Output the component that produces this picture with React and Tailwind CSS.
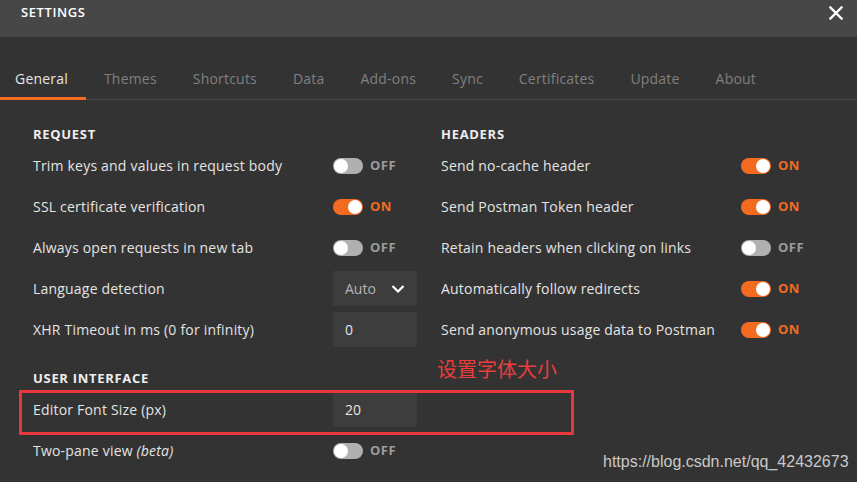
import React from "react";

const Toggle = ({ on }) => (
  <div className="flex items-center gap-[7px]">
    <div
      className={
        "w-[30px] h-[16px] rounded-full flex items-center px-[1px] " +
        (on ? "bg-[#f26b21] justify-end" : "bg-[#b0b0b0] justify-start")
      }
    >
      <div className="w-[14px] h-[14px] rounded-full bg-white" />
    </div>
    <span
      className={
        "text-[13px] font-bold tracking-[0.5px] " +
        (on ? "text-[#f26b21]" : "text-[#9c9c9c]")
      }
    >
      {on ? "ON" : "OFF"}
    </span>
  </div>
);

const Row = ({ label, children }) => (
  <div className="flex items-center h-[41px]">
    <div className="w-[300px] text-[14px] text-[#e4e4e4] tracking-[0.2px]">{label}</div>
    {children}
  </div>
);

const Heading = ({ children }) => (
  <div className="h-[20px] flex items-center text-[13px] font-bold text-[#eeeeee] tracking-[0.7px]">
    {children}
  </div>
);

const Box = ({ children }) => (
  <div className="w-[84px] h-[35px] rounded-[3px] bg-[#3d3d3d] flex items-center px-[12px] text-[14px] text-[#e4e4e4]">
    {children}
  </div>
);

export default function App() {
  const tabs = [
    "General",
    "Themes",
    "Shortcuts",
    "Data",
    "Add-ons",
    "Sync",
    "Certificates",
    "Update",
    "About",
  ];
  return (
    <div
      className="relative w-[857px] h-[482px] bg-[#333333] overflow-hidden"
      style={{ fontFamily: '"Open Sans", "Noto Sans CJK SC", sans-serif' }}
    >
      <div className="h-[37px] bg-[#474747] flex items-center justify-between pl-[21px] pr-[14px]">
        <span className="text-[13px] font-semibold text-white tracking-[0.6px] -mt-[11px]">
          SETTINGS
        </span>
        <svg width="14" height="14" viewBox="0 0 14 14" className="-mt-[11px]">
          <path d="M1.5 1.5 L12.5 12.5 M12.5 1.5 L1.5 12.5" stroke="#ffffff" strokeWidth="2.4" strokeLinecap="square" />
        </svg>
      </div>

      <div className="flex pt-[32px] border-b border-[#4a4a4a]">
        {tabs.map((t, i) => (
          <div
            key={t}
            className={
              "h-[31px] -mb-[1px] pb-[8px] text-[14px] leading-[20px] tracking-[0.2px] border-b-[3px] " +
              (i === 0
                ? "pl-[15px] pr-[18px] border-[#f26b21] text-[#e6e6e6]"
                : "px-[18px] border-transparent text-[#808080]")
            }
          >
            {t}
          </div>
        ))}
      </div>

      <div className="flex pt-[25px] pl-[33px]">
        <div className="w-[408px] flex flex-col">
          <Heading>REQUEST</Heading>
          <Row label="Trim keys and values in request body">
            <Toggle on={false} />
          </Row>
          <Row label="SSL certificate verification">
            <Toggle on={true} />
          </Row>
          <Row label="Always open requests in new tab">
            <Toggle on={false} />
          </Row>
          <Row label="Language detection">
            <div className="w-[84px] h-[35px] bg-[#3d3d3d] flex items-center justify-between pl-[12px] pr-[12px] text-[14px] text-[#b4b4b4]">
              <span>Auto</span>
              <svg width="14" height="10" viewBox="0 0 14 10">
                <path d="M1.5 2 L7 7.5 L12.5 2" fill="none" stroke="#ffffff" strokeWidth="2.2" />
              </svg>
            </div>
          </Row>
          <Row label="XHR Timeout in ms (0 for infinity)">
            <Box>0</Box>
          </Row>
          <div className="h-[19px]" />
          <Heading>USER INTERFACE</Heading>
          <Row label="Editor Font Size (px)">
            <Box>20</Box>
          </Row>
          <Row
            label={
              <span>
                Two-pane view <i>(beta)</i>
              </span>
            }
          >
            <Toggle on={false} />
          </Row>
        </div>
        <div className="w-[408px] flex flex-col">
          <Heading>HEADERS</Heading>
          <Row label="Send no-cache header">
            <Toggle on={true} />
          </Row>
          <Row label="Send Postman Token header">
            <Toggle on={true} />
          </Row>
          <Row label="Retain headers when clicking on links">
            <Toggle on={false} />
          </Row>
          <Row label="Automatically follow redirects">
            <Toggle on={true} />
          </Row>
          <Row label="Send anonymous usage data to Postman">
            <Toggle on={true} />
          </Row>
        </div>
      </div>

      <div className="absolute left-[19px] top-[390px] w-[555px] h-[45px] border-[3px] border-[#e8383d]" />
      <div
        className="absolute left-[437px] top-[356px] text-[20px] text-[#ec3c3c] leading-[26px]"
        style={{ fontFamily: '"Noto Sans CJK SC", sans-serif' }}
      >
        设置字体大小
      </div>
      <div
        className="absolute left-[603px] top-[451px] text-[16px] text-[#c9c9c9] leading-[22px]"
        style={{ fontFamily: '"Liberation Sans", Arial, sans-serif' }}
      >
        https://blog.csdn.net/qq_42432673
      </div>
    </div>
  );
}
